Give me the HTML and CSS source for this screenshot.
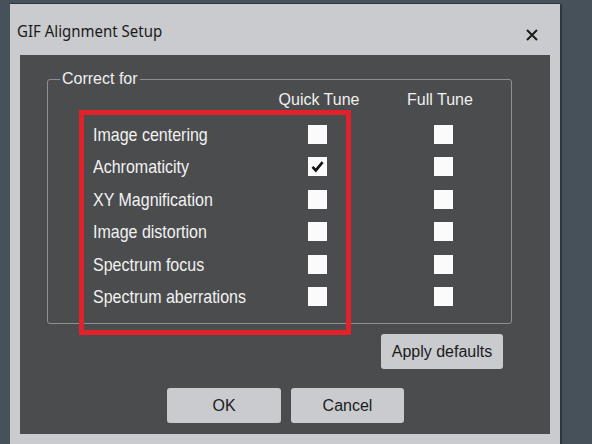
FILE: index.html
```html
<!DOCTYPE html>
<html>
<head>
<meta charset="utf-8">
<link rel="stylesheet" href="styles.css">
</head>
<body>
<div class="dialog">
  <div class="titlebar">
    <span class="title">GIF Alignment Setup</span>
    <svg class="close" width="12" height="12" viewBox="0 0 12 12"><path d="M1 1 L11 11 M11 1 L1 11" stroke="#1c1c1c" stroke-width="2" fill="none"/></svg>
  </div>
  <div class="panel">
    <fieldset class="group">
      <legend class="legend">Correct for</legend>
      <div class="header">
        <span class="colhead">Quick Tune</span>
        <span class="colhead">Full Tune</span>
      </div>
      <div class="body">
        <div class="highlight">
          <div class="row"><span class="label">Image centering</span><span class="check"></span></div>
          <div class="row"><span class="label">Achromaticity</span><span class="check"><svg width="19" height="19" viewBox="0 0 19 19"><path d="M4.5 9.8 L7.8 13.4 L14.6 5.2" stroke="#111" stroke-width="2.6" fill="none"/></svg></span></div>
          <div class="row"><span class="label">XY Magnification</span><span class="check"></span></div>
          <div class="row"><span class="label">Image distortion</span><span class="check"></span></div>
          <div class="row"><span class="label">Spectrum focus</span><span class="check"></span></div>
          <div class="row"><span class="label">Spectrum aberrations</span><span class="check"></span></div>
        </div>
        <div class="full">
          <div class="cell"><span class="check"></span></div>
          <div class="cell"><span class="check"></span></div>
          <div class="cell"><span class="check"></span></div>
          <div class="cell"><span class="check"></span></div>
          <div class="cell"><span class="check"></span></div>
          <div class="cell"><span class="check"></span></div>
        </div>
      </div>
    </fieldset>
    <div class="actions">
      <button class="btn btn-apply">Apply defaults</button>
    </div>
    <div class="footer">
      <button class="btn btn-ok">OK</button>
      <button class="btn btn-cancel">Cancel</button>
    </div>
  </div>
</div>
</body>
</html>
```
FILE: styles.css
```css
html, body {
  margin: 0;
  padding: 0;
}
body {
  background: #46515a;
  width: 592px;
  height: 444px;
  overflow: hidden;
  font-family: "Liberation Sans", Arial, sans-serif;
}
.dialog {
  margin: 4px 0 0 10px;
  width: 550px;
  height: 440px;
  background: #c9cbce;
  box-shadow: 2px 0 0 #30363b, 0 -1px 0 #30363b;
}
.titlebar {
  height: 51px;
  display: flex;
  justify-content: space-between;
  align-items: flex-start;
  padding: 0 22px 0 7px;
  box-sizing: border-box;
}
.title {
  display: inline-block;
  font-family: "Noto Sans", "Liberation Sans", sans-serif;
  font-size: 15px;
  line-height: 20px;
  margin-top: 16px;
  color: #1a1a1a;
  transform: scaleY(1.1);
}
.close {
  margin-top: 25px;
  display: block;
}
.panel {
  margin: 0 10px;
  height: 379px;
  background: #4b4c4e;
  padding-top: 15px;
  box-sizing: border-box;
}
.group {
  margin: 0 0 0 27px;
  width: 465px;
  height: 254px;
  box-sizing: border-box;
  border: 1px solid #8d8f92;
  border-radius: 3px;
  padding: 0;
  min-width: 0;
}
.legend {
  margin-left: 12px;
  padding: 0 2px;
  font-size: 16px;
  line-height: 18px;
  color: #f0f0f0;
}
.header {
  display: flex;
  gap: 21px;
  margin: 3px 0 0 221px;
}
.colhead {
  width: 100px;
  text-align: center;
  font-size: 16px;
  line-height: 18px;
  color: #f0f0f0;
}
.body {
  display: flex;
  align-items: flex-start;
  margin: 1px 0 0 31px;
}
.highlight {
  border: 5px solid #e1222b;
  padding: 3px 19px 17px 9px;
}
.row {
  display: flex;
  align-items: center;
  height: 32.5px;
}
.label {
  display: inline-block;
  width: 215px;
  font-size: 16px;
  line-height: 18px;
  color: #f2f2f2;
  padding-top: 1px;
  transform: scaleY(1.12);
  transform-origin: left center;
}
.full {
  margin-left: 83px;
  padding-top: 8px;
}
.cell {
  display: flex;
  align-items: center;
  height: 32.5px;
}
.check {
  display: block;
  width: 19px;
  height: 19px;
  background: #fbfbfb;
}
.check svg {
  display: block;
}
.actions {
  display: flex;
  justify-content: flex-end;
  padding-right: 47px;
  margin-top: 10px;
}
.footer {
  display: flex;
  gap: 10px;
  margin-top: 19px;
  padding-left: 147px;
}
.btn {
  height: 35px;
  border: none;
  border-radius: 3px;
  background: #c9cbce;
  color: #1b1b1b;
  font-family: "Liberation Sans", Arial, sans-serif;
  font-size: 16px;
  padding: 0;
}
.btn-apply { width: 122px; }
.btn-ok { width: 114px; }
.btn-cancel { width: 113px; }
```
